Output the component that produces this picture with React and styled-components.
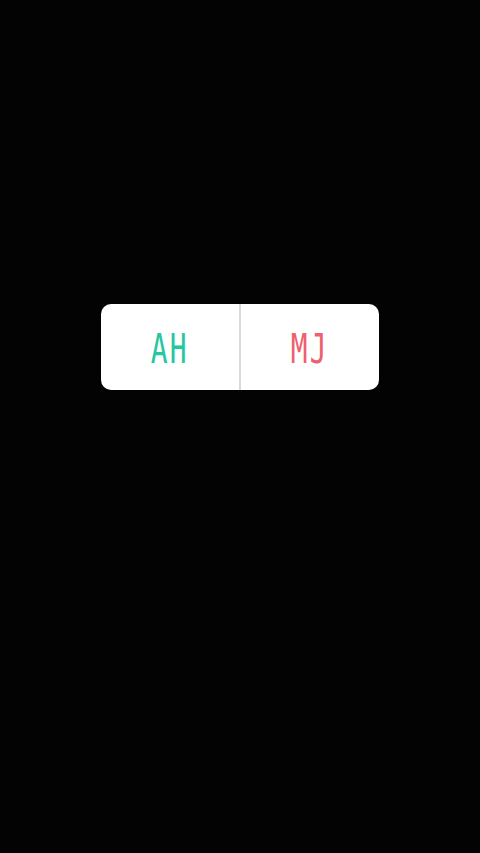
import React from 'react';
import styled, { createGlobalStyle } from 'styled-components';

const GlobalStyle = createGlobalStyle`
  html, body {
    margin: 0;
    padding: 0;
    background: #030303;
  }
  #root {
    min-height: 853px;
  }
`

const Screen = styled.div`
  width: 480px;
  height: 853px;
  background: #030303;
  display: flex;
  justify-content: center;
  padding-top: 304px;
  box-sizing: border-box;
`

const Poll = styled.div`
  width: 278px;
  height: 86px;
  background: #ffffff;
  border-radius: 10px;
  display: flex;
  overflow: hidden;
`

const Option = styled.div`
  flex: 1;
  display: flex;
  align-items: center;
  justify-content: center;
  border-left: ${props => (props.first ? 'none' : '2px solid #d9d9d9')};
`

const Label = styled.span`
  display: inline-block;
  font-family: "DejaVu Sans Mono", "Liberation Mono", monospace;
  font-size: 41px;
  line-height: 1;
  color: ${props => props.color};
  transform: scaleX(0.68);
  letter-spacing: 3px;
  margin-top: 4px;
`

const App = () => {
  const options = [
    { id: 1, text: 'AH', color: '#26c6a0' },
    { id: 2, text: 'MJ', color: '#ee5f6f' },
  ]

  return (
    <>
      <GlobalStyle />
      <Screen>
        <Poll>
          {options.map((opt, i) => (
            <Option key={opt.id} first={i === 0}>
              <Label color={opt.color}>{opt.text}</Label>
            </Option>
          ))}
        </Poll>
      </Screen>
    </>
  )
}

export default App;
